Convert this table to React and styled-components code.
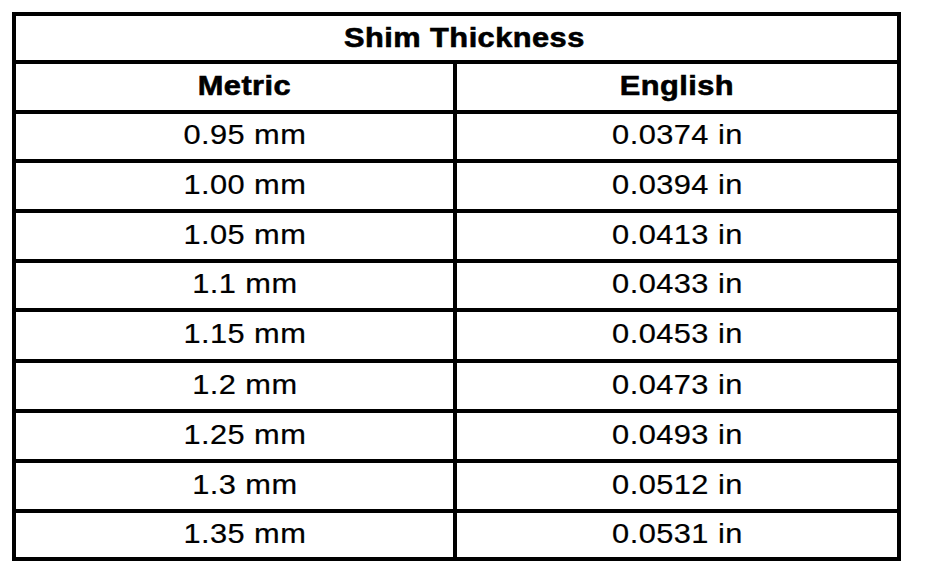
import React from "react";
import styled, { createGlobalStyle } from "styled-components";

const Global = createGlobalStyle`
  html, body { margin: 0; padding: 0; background: #ffffff; }
  body { font-family: "Liberation Sans", Arial, sans-serif; color: #000; }
`;

const Page = styled.div`
  padding: 12px 0 0 12px;
`;

const rowHeights = [44, 46, 45, 46, 46, 45, 47, 46, 46, 46, 44];

const Grid = styled.div`
  display: grid;
  width: fit-content;
  grid-template-columns: 437px 440px;
  grid-template-rows: ${rowHeights.map((h) => h + "px").join(" ")};
  gap: 4px;
  padding: 4px;
  background: #000;
`;

const Cell = styled.div`
  background: #fff;
  display: flex;
  align-items: center;
  justify-content: center;
  font-size: 28px;
  font-weight: ${(p) => (p.$bold ? 700 : 400)};
  padding-left: ${(p) => (p.$left ? "20px" : "0")};
  padding-bottom: 3px;
  box-sizing: border-box;
  white-space: nowrap;
`;

const Title = styled(Cell)`
  grid-column: 1 / span 2;
  padding-left: 16px;
  padding-bottom: 1px;
`;

const Label = styled.span`
  display: inline-block;
  letter-spacing: 0.4px;
  transform: scaleX(1.1);
  -webkit-text-stroke: ${(p) => (p.$bold ? "0.6px #000" : "0.2px #000")};
`;

const rows = [
  ["0.95 mm", "0.0374 in"],
  ["1.00 mm", "0.0394 in"],
  ["1.05 mm", "0.0413 in"],
  ["1.1 mm", "0.0433 in"],
  ["1.15 mm", "0.0453 in"],
  ["1.2 mm", "0.0473 in"],
  ["1.25 mm", "0.0493 in"],
  ["1.3 mm", "0.0512 in"],
  ["1.35 mm", "0.0531 in"],
];

export default function App() {
  return (
    <>
      <Global />
      <Page>
        <Grid>
          <Title $bold><Label $bold>Shim Thickness</Label></Title>
          <Cell $bold $left><Label $bold>Metric</Label></Cell>
          <Cell $bold><Label $bold>English</Label></Cell>
          {rows.map(([m, e]) => (
            <React.Fragment key={m}>
              <Cell $left><Label>{m}</Label></Cell>
              <Cell><Label>{e}</Label></Cell>
            </React.Fragment>
          ))}
        </Grid>
      </Page>
    </>
  );
}
